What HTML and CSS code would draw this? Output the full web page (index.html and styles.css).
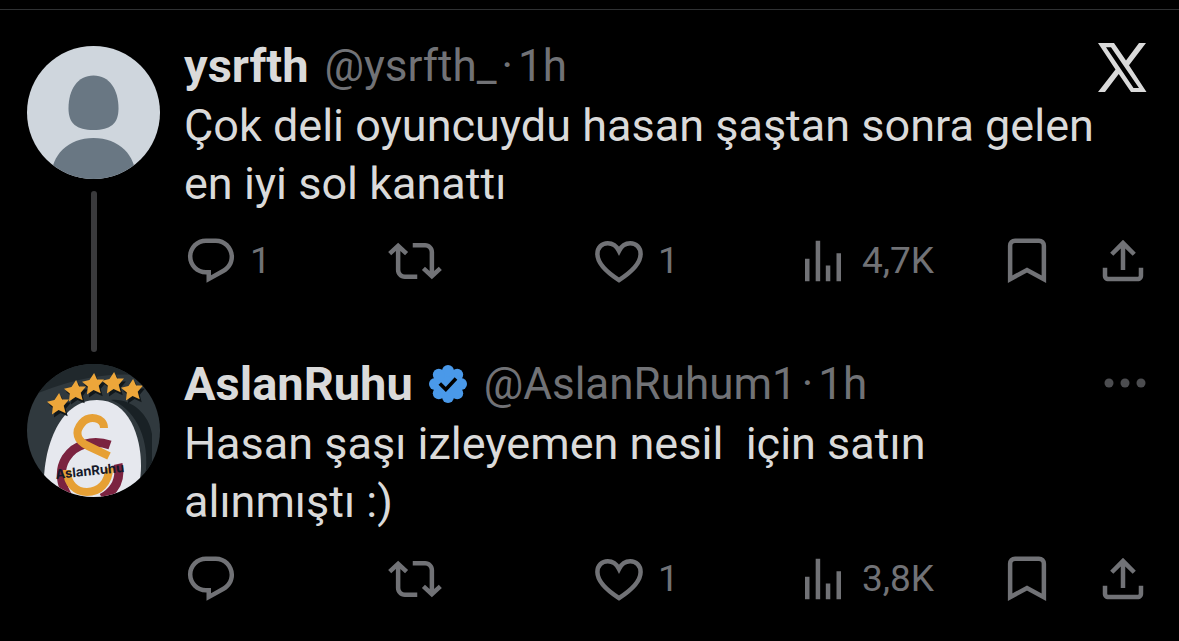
FILE: index.html
```html
<!DOCTYPE html>
<html lang="tr">
<head>
  <meta charset="UTF-8" />
  <meta name="viewport" content="width=device-width, initial-scale=1.0"/>
  <title>Post / X</title>
  <link rel="stylesheet" href="styles.css">
</head>
<body>
  <!-- shared action icons -->
  <svg class="sprite" aria-hidden="true">
    <symbol id="i-reply" viewBox="0 0 24 24"><path d="M1.751 10c0-4.42 3.584-8 8.005-8h4.366c4.49 0 8.129 3.64 8.129 8.13 0 2.96-1.607 5.68-4.196 7.11l-8.054 4.46v-3.69h-.067c-4.49.1-8.183-3.51-8.183-8.01zm8.005-6c-3.317 0-6.005 2.69-6.005 6 0 3.37 2.77 6.08 6.138 6.01l.351-.01h1.761v2.3l5.087-2.81c1.951-1.08 3.163-3.13 3.163-5.36 0-3.39-2.744-6.13-6.129-6.13H9.756z"/></symbol>
    <symbol id="i-repost" viewBox="0 0 24 24"><path d="M4.5 3.88l4.432 4.14-1.364 1.46L5.5 7.55V16c0 1.1.896 2 2 2H13v2H7.5c-2.209 0-4-1.79-4-4V7.55L1.432 9.48.068 8.02 4.5 3.88zM16.5 6H11V4h5.5c2.209 0 4 1.79 4 4v8.45l2.068-1.93 1.364 1.46-4.432 4.14-4.432-4.14 1.364-1.46 2.068 1.93V8c0-1.1-.896-2-2-2z"/></symbol>
    <symbol id="i-like" viewBox="0 0 24 24"><path d="M12 20.5C7.200 17.400 2.400 13.300 2.400 8.900 2.400 6 4.400 4.100 7 4.100c2.100 0 3.900 1.200 5 3.400 1.100-2.200 2.900-3.400 5-3.400 2.600 0 4.600 1.900 4.600 4.800 0 4.400-4.800 8.500-9.600 11.600z" fill="none" stroke="currentColor" stroke-width="2"/></symbol>
    <symbol id="i-views" viewBox="0 0 24 24"><path d="M8.75 21V3h2v18h-2zM18 21V8.500h2V21h-2zM4 21V11h2v10H4zm9.248 0v-7h2v7h-2z"/></symbol>
    <symbol id="i-save" viewBox="0 0 24 24"><path d="M4.500 20.100V5.200C4.500 3.900 5.400 3 6.700 3h10.600c1.300 0 2.200.9 2.200 2.200v14.900L12 16z" fill="none" stroke="currentColor" stroke-width="2"/></symbol>
    <symbol id="i-share" viewBox="0 0 24 24"><path d="M12 2.590l5.700 5.700-1.410 1.420L13 6.410V16h-2V6.410l-3.300 3.300-1.410-1.420L12 2.590zM21 15l-.02 3.510c0 1.380-1.120 2.490-2.500 2.490H5.500C4.110 21 3 19.880 3 18.500V15h2v3.500c0 .28.22.5.5.5h12.980c.28 0 .5-.22.5-.5L19 15h2z"/></symbol>
    <symbol id="i-star" viewBox="-10 -10 20 20"><path d="M1-10L3.700-4 10-4 5.200 1.500 7 8.500 0.500 5.400-5.500 9.500-4.700 2.200-10-2-3.200-3.700z"/></symbol>
  </svg>

  <main class="thread">
    <article class="post">
      <div class="side">
        <svg class="avatar" viewBox="0 0 133 133" role="img" aria-label="ysrfth">
          <rect width="133" height="133" fill="#cfd6dd"/>
          <path d="M66.500 29.500c16 0 25 14 25 33 0 15-8 21.500-25 21.500s-25-6.500-25-21.500c0-19 9-33 25-33z" fill="#697783"/>
          <path d="M24 133c0-24 17-41 42.500-41S109 109 109 133z" fill="#697783"/>
        </svg>
        <div class="line"></div>
      </div>
      <div class="content">
        <header class="head">
          <a class="name" href="#">ysrfth</a>
          <a class="handle" href="#">@ysrfth_</a>
          <span class="dot">·</span>
          <time class="time">1h</time>
          <svg class="logo" viewBox="0 0 56 56" role="img" aria-label="X"><path fill-rule="evenodd" d="M4 5h16l12 17.500L45 5H52L35 27.200 52.500 54H37L24.700 36 11 54H4l17.500-22.500zM12 9.300l27.500 40.700h5.500L17 9.300z"/></svg>
        </header>
        <p class="text">Çok deli oyuncuydu hasan şaştan sonra gelen en iyi sol kanattı</p>
        <div class="actions">
          <button class="action" aria-label="Reply"><svg class="icon"><use href="#i-reply"/></svg>1</button>
          <button class="action" aria-label="Repost"><svg class="icon"><use href="#i-repost"/></svg></button>
          <button class="action" aria-label="Like"><svg class="icon"><use href="#i-like"/></svg>1</button>
          <button class="action" aria-label="Views"><svg class="icon"><use href="#i-views"/></svg>4,7K</button>
          <button class="action" aria-label="Bookmark"><svg class="icon"><use href="#i-save"/></svg></button>
          <button class="action" aria-label="Share"><svg class="icon"><use href="#i-share"/></svg></button>
        </div>
      </div>
    </article>

    <article class="post">
      <div class="side">
        <svg class="avatar" viewBox="0 0 133 133">
          <rect width="133" height="133" fill="#30393e"/>
          <path d="M0 0h133v14C90 6 50 12 0 34z" fill="#20282c"/>
          <path d="M84 36c22 8 38 34 35 70l-8 27h14V70C122 50 104 34 84 36z" fill="#192125"/>
          <path d="M17 133c-3-46 14-97 53-97 32 0 44 36 44 66 0 14-3 24-7 31z" fill="#e6e8ee"/>
          <g fill="#11171a">
            <use href="#i-star" x="22" y="32" width="22" height="22"/>
            <use href="#i-star" x="39" y="19" width="22" height="22"/>
            <use href="#i-star" x="57" y="12" width="22" height="22"/>
            <use href="#i-star" x="77" y="11" width="22" height="22"/>
            <use href="#i-star" x="96" y="18" width="22" height="22"/>
          </g>
          <g fill="#eda63a">
            <use href="#i-star" x="20" y="29" width="22" height="22"/>
            <use href="#i-star" x="37" y="16" width="22" height="22"/>
            <use href="#i-star" x="55" y="9" width="22" height="22"/>
            <use href="#i-star" x="75" y="8" width="22" height="22"/>
            <use href="#i-star" x="94" y="15" width="22" height="22"/>
          </g>
          <g fill="none" stroke-width="8">
            <path d="M83 81C66 75 48 80 39 94c-8 13-5 28 3 40M91 100c3 14-2 26-16 34" stroke="#7b2340" stroke-width="9"/>
            <path d="M77 64c0-11-15-13-22-5-8 9-5 18 6 23l21 10M40 106c0 14 9 22 20 22 12 0 22-9 22-24" stroke="#e6a035"/>
          </g>
          <text class="avatar-text" x="29" y="115" transform="rotate(-6 29 115)">AslanRuhu</text>
        </svg>
      </div>
      <div class="content">
        <header class="head">
          <a class="name" href="#">AslanRuhu</a>
          <svg class="badge" viewBox="0 0 40 40" role="img" aria-label="Verified">
            <g fill="#4a99e9">
              <circle cx="20" cy="20" r="15"/>
              <circle cx="20" cy="7" r="6"/><circle cx="29.200" cy="10.800" r="6"/>
              <circle cx="33" cy="20" r="6"/><circle cx="29.200" cy="29.200" r="6"/>
              <circle cx="20" cy="33" r="6"/><circle cx="10.800" cy="29.200" r="6"/>
              <circle cx="7" cy="20" r="6"/><circle cx="10.800" cy="10.800" r="6"/>
            </g>
            <path d="M11.800 19.500l6 6 10.200-11" fill="none" stroke="#000" stroke-width="3.600"/>
          </svg>
          <a class="handle" href="#">@AslanRuhum1</a>
          <span class="dot">·</span>
          <time class="time">1h</time>
          <button class="more" aria-label="More"><svg viewBox="0 0 56 56"><circle cx="15" cy="27" r="4.500"/><circle cx="31" cy="27" r="4.500"/><circle cx="47" cy="27" r="4.500"/></svg></button>
        </header>
        <p class="text">Hasan şaşı izleyemen nesil&nbsp; için satın alınmıştı&nbsp;:)</p>
        <div class="actions">
          <button class="action" aria-label="Reply"><svg class="icon"><use href="#i-reply"/></svg></button>
          <button class="action" aria-label="Repost"><svg class="icon"><use href="#i-repost"/></svg></button>
          <button class="action" aria-label="Like"><svg class="icon"><use href="#i-like"/></svg>1</button>
          <button class="action" aria-label="Views"><svg class="icon"><use href="#i-views"/></svg>3,8K</button>
          <button class="action" aria-label="Bookmark"><svg class="icon"><use href="#i-save"/></svg></button>
          <button class="action" aria-label="Share"><svg class="icon"><use href="#i-share"/></svg></button>
        </div>
      </div>
    </article>
  </main>
</body>
</html>
```
FILE: styles.css
```css
* { box-sizing: border-box; }
body {
  font-family: Roboto, "Liberation Sans", sans-serif;
  background: #000;
  color: #dadada;
  margin: 0;
  padding-top: 9px;
  font-size: 45px;
  line-height: 58px;
}
a {
  color: inherit;
  text-decoration: none;
}
button {
  background: none;
  border: none;
  padding: 0;
  font: inherit;
  color: inherit;
  cursor: pointer;
}
svg {
  display: block;
  fill: currentColor;
  flex-shrink: 0;
}
.sprite {
  position: absolute;
  width: 0;
  height: 0;
}
.thread {
  border-top: 1px solid #2f3133;
  padding: 27px 29px 0 27px;
}
.post {
  display: flex;
  gap: 24px;
}
.side {
  display: flex;
  flex-direction: column;
  align-items: center;
  gap: 12px;
  padding: 9px 0 3px;
}
.avatar {
  width: 133px;
  height: 133px;
  border-radius: 50%;
}
.avatar-text {
  font-family: Inter, "Liberation Sans", sans-serif;
  font-size: 13px;
  font-weight: 700;
  fill: #15192a;
}
.line {
  flex: 1;
  width: 6px;
  border-radius: 3px;
  background: #3a3a3c;
}
.content {
  flex: 1;
  min-width: 0;
}
.head {
  display: flex;
  align-items: center;
  height: 60px;
  padding-bottom: 2px;
  white-space: nowrap;
}
.name {
  font-size: 47px;
  font-weight: 700;
}
.badge {
  width: 40px;
  height: 40px;
  margin-left: 15px;
}
.handle {
  margin-left: 16px;
}
.handle, .dot, .time {
  color: #717276;
  font-size: 44px;
}
.dot {
  margin: 0 5px;
}
.logo {
  width: 56px;
  height: 56px;
  margin-left: auto;
}
.more {
  margin-left: auto;
  color: #4c4d50;
}
.more svg {
  width: 56px;
  height: 56px;
}
.text {
  margin: 0;
  padding-right: 40px;
}
.actions {
  display: grid;
  grid-template-columns: repeat(4, 1fr) 96px 54px;
  padding: 21px 0 67px;
}
.action {
  display: flex;
  align-items: center;
  gap: 12px;
  height: 54px;
  color: #717276;
  font-size: 37px;
}
.icon {
  width: 54px;
  height: 54px;
}
```
